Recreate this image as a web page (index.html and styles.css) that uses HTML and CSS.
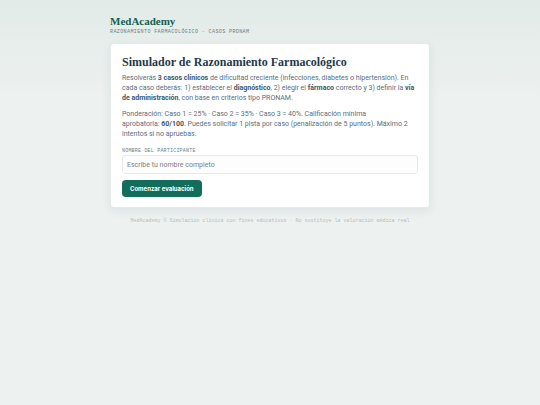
FILE: index.html
```html
<!DOCTYPE html>
<html lang="es">
<head>
    <meta charset="UTF-8">
    <meta name="viewport" content="width=device-width, initial-scale=1.0">
    <title>MedAcademy</title>
    <link rel="stylesheet" href="styles.css">
</head>
<body>
    <div class="container">
        <header class="header">
            <div class="brand">MedAcademy</div>
            <div class="tagline">Razonamiento farmacológico · Casos PRONAM</div>
        </header>

        <main class="card">
            <h1 class="title">Simulador de Razonamiento Farmacológico</h1>
            <p class="text">Resolverás <strong>3 casos clínicos</strong> de dificultad creciente (infecciones, diabetes o hipertensión). En cada caso deberás: 1) establecer el <strong>diagnóstico</strong>, 2) elegir el <strong>fármaco</strong> correcto y 3) definir la <strong>vía de administración</strong>, con base en criterios tipo PRONAM.</p>
            <p class="text">Ponderación: Caso 1 = 25% · Caso 2 = 35% · Caso 3 = 40%. Calificación mínima<br>aprobatoria: <strong>60/100</strong>. Puedes solicitar 1 pista por caso (penalización de 5 puntos). Máximo 2<br>intentos si no apruebas.</p>

            <form class="start-form">
                <label class="label" for="nombre">Nombre del participante</label>
                <input class="input" type="text" id="nombre" name="nombre" placeholder="Escribe tu nombre completo">
                <button class="btn" type="button">Comenzar evaluación</button>
            </form>
        </main>

        <footer class="footer">MedAcademy © Simulación clínica con fines educativos · No sustituye la valoración médica real</footer>
    </div>
</body>
</html>
```

FILE: styles.css
```css
* {
    box-sizing: border-box;
}
body {
    margin: 0;
    min-height: 100vh;
    background: linear-gradient(180deg, #e2ebe8 0, #edf1f0 100px);
    color: #1f3a4a;
    font-family: Roboto, sans-serif;
    font-size: 7px;
    line-height: 10px;
}
.container {
    max-width: 336px;
    margin: 0 auto;
    padding: 14px 8px;
}
.header {
    margin-bottom: 7px;
}
.brand {
    font-family: "Liberation Serif", serif;
    font-size: 11px;
    font-weight: 700;
    line-height: 14px;
    color: #155f50;
}
.tagline,
.label,
.footer {
    font-family: "Liberation Mono", monospace;
    font-size: 5px;
    line-height: 8px;
}
.tagline {
    text-transform: uppercase;
    letter-spacing: 0.08em;
    color: #6b7f88;
}
.card {
    background: #fff;
    border: 1px solid #e4eaea;
    border-radius: 4px;
    padding: 11px 11px 10px;
    box-shadow: 0 3px 10px rgba(31, 58, 74, 0.08);
}
.title {
    margin: 0 0 4px;
    font-family: "Liberation Serif", serif;
    font-size: 12px;
    font-weight: 700;
    line-height: 14px;
    color: #1f3a4a;
}
.text {
    margin: 0 0 6px;
    color: #5a6e7c;
}
.text strong {
    font-weight: 700;
    color: #405766;
}
.start-form {
    display: flex;
    flex-direction: column;
    align-items: flex-start;
}
.label {
    margin-top: 2px;
    text-transform: uppercase;
    letter-spacing: 0.04em;
    color: #6b7f88;
}
.input {
    width: 100%;
    height: 19px;
    padding: 0 4px;
    border: 1px solid #e6eaeb;
    border-radius: 3px;
    background: #fdfdfd;
    color: #1f3a4a;
    font-family: inherit;
    font-size: 7px;
}
.input::placeholder {
    color: #7c8083;
}
.btn {
    height: 17px;
    margin-top: 6px;
    padding: 0 8px;
    border: none;
    border-radius: 4px;
    background: #126d5a;
    color: #fff;
    font-family: Inter, sans-serif;
    font-size: 6px;
    font-weight: 700;
    cursor: pointer;
}
.footer {
    margin-top: 9px;
    text-align: center;
    color: #b2bfc0;
}
```
